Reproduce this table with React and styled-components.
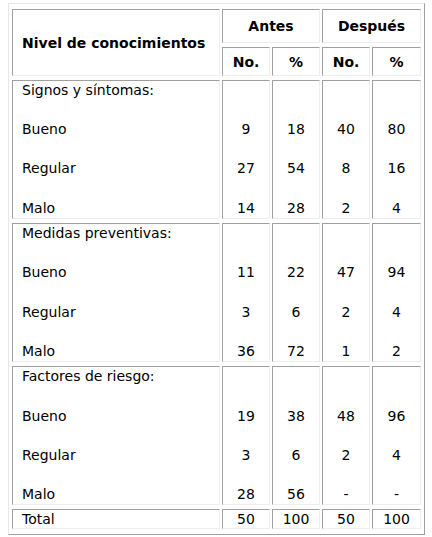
import React from 'react'
import styled, { createGlobalStyle } from 'styled-components'

const sections = [
  {
    title: 'Signos y síntomas:',
    height: 139,
    rows: [
      ['Bueno', 9, 18, 40, 80],
      ['Regular', 27, 54, 8, 16],
      ['Malo', 14, 28, 2, 4],
    ],
  },
  {
    title: 'Medidas preventivas:',
    height: 139,
    rows: [
      ['Bueno', 11, 22, 47, 94],
      ['Regular', 3, 6, 2, 4],
      ['Malo', 36, 72, 1, 2],
    ],
  },
  {
    title: 'Factores de riesgo:',
    height: 138,
    rows: [
      ['Bueno', 19, 38, 48, 96],
      ['Regular', 3, 6, 2, 4],
      ['Malo', 28, 56, '-', '-'],
    ],
  },
]

// each section cell is 7 lines: title, blank, value, blank, value, blank, value
const toLines = (section, col) => {
  const first = col === 0 ? section.title : ''
  const lines = [first]
  section.rows.forEach((r) => {
    lines.push('')
    lines.push(r[col])
  })
  return lines
}

export default function App() {
  return (
    <>
      <GlobalStyle />
      <Table>
        <colgroup>
          <Col $w={208} />
          <Col $w={48} />
          <Col $w={48} />
          <Col $w={48} />
          <Col $w={49} />
        </colgroup>
        <tbody>
          <tr>
            <Head rowSpan={2} $left $h={34}>
              Nivel de conocimientos
            </Head>
            <Head colSpan={2} $h={34}>
              Antes
            </Head>
            <Head colSpan={2} $h={34}>
              Después
            </Head>
          </tr>
          <tr>
            <Head $h={29}>No.</Head>
            <Head $h={29}>%</Head>
            <Head $h={29}>No.</Head>
            <Head $h={29}>%</Head>
          </tr>
          {sections.map((s) => (
            <tr key={s.title}>
              {[0, 1, 2, 3, 4].map((col) => (
                <Cell key={col} $left={col === 0} $h={s.height}>
                  {toLines(s, col).map((t, i) => (
                    <Line key={i}>{t}</Line>
                  ))}
                </Cell>
              ))}
            </tr>
          ))}
          <tr>
            <Cell $left $h={20}>
              Total
            </Cell>
            <Cell $h={20}>50</Cell>
            <Cell $h={20}>100</Cell>
            <Cell $h={20}>50</Cell>
            <Cell $h={20}>100</Cell>
          </tr>
        </tbody>
      </Table>
    </>
  )
}

const GlobalStyle = createGlobalStyle`
  body {
    margin: 3px 0 0 8px;
    background: #fff;
  }
`

const Table = styled.table`
  border-collapse: separate;
  border-spacing: 2px 4px;
  padding: 1px;
  width: 417px;
  table-layout: fixed;
  border: 1px solid;
  border-color: #e6e6e6 #a0a0a0 #a0a0a0 #e6e6e6;
  font-family: 'DejaVu Sans', Verdana, sans-serif;
  font-size: 14px;
  color: #000;
`

const Col = styled.col`
  width: ${(p) => p.$w}px;
`

const Cell = styled.td`
  box-sizing: border-box;
  height: ${(p) => p.$h}px;
  border: 1px solid;
  border-color: #a0a0a0 #eeeeee #eeeeee #a0a0a0;
  padding: 0 0 0 ${(p) => (p.$left ? '9px' : '0')};
  text-align: ${(p) => (p.$left ? 'left' : 'center')};
  vertical-align: top;
  line-height: 18px;
  white-space: nowrap;
`

const Head = styled(Cell).attrs({ as: 'th' })`
  font-weight: bold;
  vertical-align: middle;
`

const Line = styled.div`
  height: 19.6px;
  line-height: 19.6px;
`
